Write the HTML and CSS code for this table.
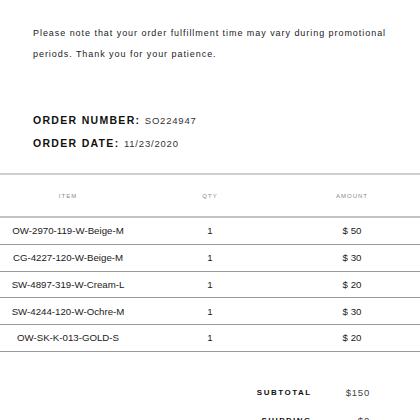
FILE: index.html
```html
<!DOCTYPE html>
<html>
<head>
<meta charset="utf-8">
<link rel="stylesheet" href="styles.css">
</head>
<body>
<div class="page">
  <p class="note">Please note that your order fulfillment time may vary during promotional periods. Thank you for your patience.</p>
  <div class="order">
    <div class="order-line"><span class="label">ORDER NUMBER:</span> <span class="value">SO224947</span></div>
    <div class="order-line"><span class="label">ORDER DATE:</span> <span class="value">11/23/2020</span></div>
  </div>
  <div class="table">
    <div class="thead">
      <div>ITEM</div><div>QTY</div><div>AMOUNT</div>
    </div>
    <div class="row"><div>OW-2970-119-W-Beige-M</div><div>1</div><div>$ 50</div></div>
    <div class="row"><div>CG-4227-120-W-Beige-M</div><div>1</div><div>$ 30</div></div>
    <div class="row"><div>SW-4897-319-W-Cream-L</div><div>1</div><div>$ 20</div></div>
    <div class="row"><div>SW-4244-120-W-Ochre-M</div><div>1</div><div>$ 30</div></div>
    <div class="row"><div>OW-SK-K-013-GOLD-S</div><div>1</div><div>$ 20</div></div>
  </div>
  <div class="totals">
    <div class="t-label">SUBTOTAL</div><div class="t-value">$150</div>
    <div class="t-label">SHIPPING</div><div class="t-value">$0</div>
  </div>
</div>
</body>
</html>
```
FILE: styles.css
```css
html, body {
  margin: 0;
  padding: 0;
  background: #ffffff;
}
body {
  font-family: "Liberation Sans", Arial, sans-serif;
  color: #111;
}
.page {
  width: 420px;
  overflow: hidden;
}
.note {
  margin: 0;
  padding: 23px 30px 0 33px;
  font-size: 9px;
  line-height: 21px;
  letter-spacing: 0.95px;
  color: #222;
}
.order {
  margin-top: 42px;
  padding-left: 33px;
}
.order-line {
  line-height: 23px;
  height: 23px;
}
.label {
  font-size: 10.5px;
  font-weight: bold;
  letter-spacing: 1.3px;
  color: #111;
}
.value {
  font-size: 9.5px;
  letter-spacing: 0.8px;
  color: #333;
}
.table {
  margin-top: 20px;
}
.thead, .row {
  display: grid;
  grid-template-columns: 136px 148px 136px;
  align-items: center;
  text-align: center;
}
.thead {
  height: 41px;
  border-top: 2px solid #cfcfcf;
  border-bottom: 2px solid #c4c4c4;
  font-size: 6px;
  letter-spacing: 1px;
  color: #8a8a8a;
}
.row {
  height: 25.75px;
  border-bottom: 1px solid #9a9a9a;
  font-size: 9.7px;
  color: #1a1a1a;
}
.totals {
  margin-top: 32px;
  display: grid;
  grid-template-columns: 1fr auto;
  column-gap: 34px;
  row-gap: 10px;
  padding-right: 50px;
  line-height: 18px;
}
.t-label {
  text-align: right;
  font-size: 8px;
  font-weight: bold;
  letter-spacing: 1.5px;
  color: #111;
}
.t-value {
  text-align: right;
  font-size: 9.5px;
  letter-spacing: 0.8px;
  color: #444;
}
```
